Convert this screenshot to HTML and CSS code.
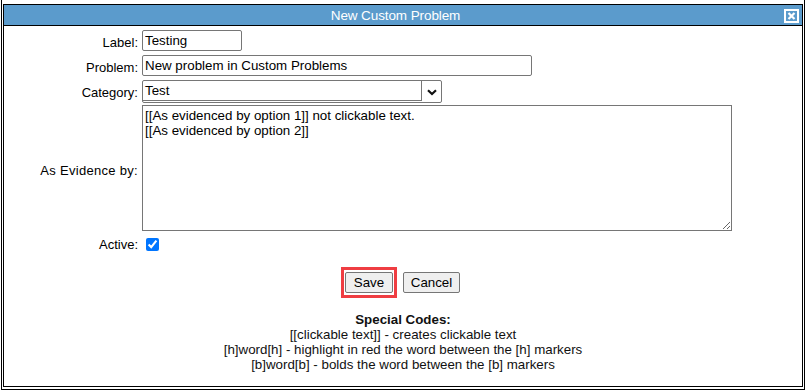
FILE: index.html
```html
<!DOCTYPE html>
<html>
<head>
<meta charset="utf-8">
<link rel="stylesheet" href="styles.css">
</head>
<body>
<div class="frame">
  <div class="dialog">
    <div class="titlebar">
      <span class="title">New Custom Problem</span>
      <span class="close" aria-label="close">
        <svg width="15" height="14" viewBox="0 0 15 14">
          <rect x="1" y="1" width="13" height="12" fill="none" stroke="#fff" stroke-width="2"/>
          <path d="M4.5 4 L10.5 10 M10.5 4 L4.5 10" stroke="#fff" stroke-width="2.2"/>
        </svg>
      </span>
    </div>
    <div class="form">
      <label class="lbl">Label:</label>
      <div class="field r1"><input class="txt w-label" type="text" value="Testing"></div>

      <label class="lbl">Problem:</label>
      <div class="field r2"><input class="txt w-problem" type="text" value="New problem in Custom Problems"></div>

      <label class="lbl">Category:</label>
      <div class="field r3">
        <div class="select">
          <div class="select-text">Test</div>
          <div class="select-arrow">
            <svg width="10" height="7" viewBox="0 0 10 7"><path d="M1 1.2 L5 5 L9 1.2" fill="none" stroke="#111" stroke-width="2.2"/></svg>
          </div>
        </div>
      </div>

      <label class="lbl lbl-wide">As Evidence by:</label>
      <div class="field r4"><textarea class="area">[[As evidenced by option 1]] not clickable text.
[[As evidenced by option 2]]</textarea></div>

      <label class="lbl">Active:</label>
      <div class="field r5"><input class="chk" type="checkbox" checked></div>
    </div>

    <div class="buttons">
      <span class="highlight"><button class="btn save">Save</button></span>
      <button class="btn cancel">Cancel</button>
    </div>

    <div class="codes">
      <div class="codes-title">Special Codes:</div>
      <div>[[clickable text]] - creates clickable text</div>
      <div>[h]word[h] - highlight in red the word between the [h] markers</div>
      <div>[b]word[b] - bolds the word between the [b] markers</div>
    </div>
  </div>
</div>
</body>
</html>
```
FILE: styles.css
```css
html, body {
  margin: 0;
  padding: 0;
  background: #fff;
}
body {
  font-family: "Liberation Sans", Arial, sans-serif;
  font-size: 13px;
  color: #000;
}
.frame {
  margin-left: 1px;
  width: 804px;
  height: 390px;
  box-sizing: border-box;
  border: 1px solid #000;
  border-top: none;
  padding: 4px 1px 2px 1px;
}
.dialog {
  height: 383px;
  box-sizing: border-box;
  border: 1px solid #000;
  background: #fff;
}
.titlebar {
  height: 21px;
  box-sizing: border-box;
  border-bottom: 1px solid #000;
  background: #5b9bcc;
  color: #fff;
  display: flex;
  align-items: center;
  justify-content: center;
  position: relative;
  padding-right: 15px;
}
.title {
  font-size: 13.5px;
  letter-spacing: -0.1px;
}
.close {
  position: absolute;
  right: 3px;
  top: 4px;
  width: 15px;
  height: 14px;
  display: block;
}
.close svg { display: block; }

.form {
  display: grid;
  grid-template-columns: 134px 1fr;
  column-gap: 4px;
  padding-top: 4px;
  align-items: center;
}
.lbl {
  text-align: right;
  line-height: 15px;
}
.lbl-wide { letter-spacing: 0.3px; }
.field { display: flex; }
.r1 { margin-bottom: 4px; }
.r2 { margin-bottom: 4px; }
.r3 { margin-bottom: 2px; }
.r4 { margin-bottom: 4px; }

.txt {
  height: 21px;
  box-sizing: border-box;
  border: 1px solid #767676;
  border-radius: 2px;
  padding: 1px 3px 1px 2px;
  font-family: "Liberation Sans", Arial, sans-serif;
  font-size: 13.33px;
  color: #000;
  margin: 0;
}
.w-label { width: 100px; }
.w-problem { width: 390px; }

.select {
  width: 300px;
  height: 23px;
  box-sizing: border-box;
  border: 1px solid #767676;
  border-radius: 2px;
  display: flex;
  font-size: 13.33px;
}
.select-text {
  flex: 1;
  border-right: 1px solid #767676;
  border-bottom: 1px solid #767676;
  margin-bottom: 1px;
  padding-left: 2px;
  line-height: 19px;
}
.select-arrow {
  width: 19px;
  display: flex;
  align-items: center;
  justify-content: center;
}
.select-arrow svg { display: block; margin-top: 1px; }

.area {
  width: 590px;
  height: 126px;
  box-sizing: border-box;
  border: 1px solid #767676;
  border-radius: 0;
  padding: 2px 2px;
  margin: 0;
  font-family: "Liberation Sans", Arial, sans-serif;
  font-size: 13.33px;
  line-height: 15px;
  color: #000;
  resize: both;
}
.chk {
  margin: 3px 3px 3px 4px;
  width: 13px;
  height: 13px;
  accent-color: #0075ff;
}

.buttons {
  display: flex;
  justify-content: center;
  align-items: center;
  gap: 6px;
  margin-top: 13px;
  padding-right: 5px;
}
.highlight {
  display: inline-block;
  border: 3px solid #ef3d42;
  padding: 2px 1px;
}
.btn {
  display: block;
  height: 21px;
  box-sizing: border-box;
  border: 1px solid #767676;
  border-radius: 2px;
  background: #efefef;
  font-family: "Liberation Sans", Arial, sans-serif;
  font-size: 13.33px;
  color: #000;
  padding: 1px 4px;
  margin: 0;
}
.save { width: 48px; }
.cancel { width: 57px; }

.codes {
  margin-top: 14px;
  text-align: center;
  line-height: 15px;
  font-size: 13.33px;
  color: #111;
}
.codes-title { font-weight: bold; }
```
